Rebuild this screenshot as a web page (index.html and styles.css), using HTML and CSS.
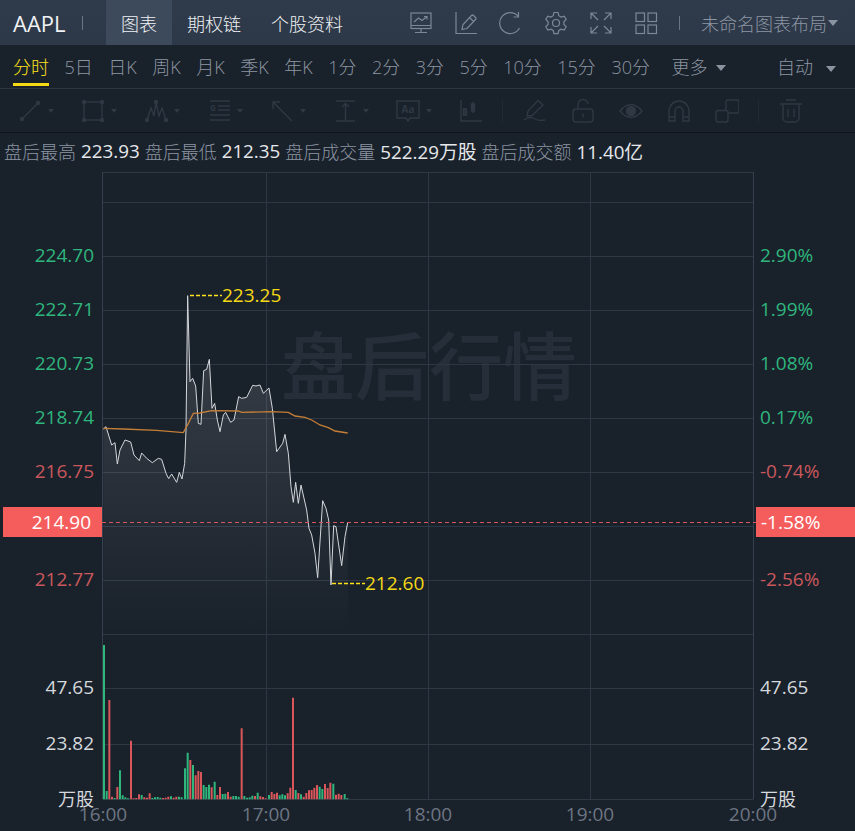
FILE: index.html
```html
<!DOCTYPE html>
<html lang="zh-CN">

<head>
    <meta charset="UTF-8">
    <title>AAPL 盘后行情</title>
    <link rel="stylesheet" href="styles.css">
</head>

<body>
    <header class="topbar">
        <span class="symbol">AAPL</span>
        <span class="top-sep"></span>
        <nav class="tabs">
            <a class="tab active">图表</a>
            <a class="tab">期权链</a>
            <a class="tab">个股资料</a>
        </nav>
        <div class="top-icons">
            <svg viewBox="0 0 24 24"><rect x="2" y="2" width="20" height="15.500"/><path d="M2 14.500h20M12 17.500v4M6 21.500h12M5 11l4.500-4 3.500 2.500 5-4M15 5.500h3v3"/></svg>
            <svg viewBox="0 0 24 24"><path d="M2 1v21.500h21M8 18.500l1-5 8.500-9q1-1 2 0l2 2q1 1 0 2L13 17.500zM15.500 6.500l4 4"/></svg>
            <svg viewBox="0 0 24 24"><path d="M20.500 17A10.500 10.500 0 1 1 19 5M19.500 1v5h-5"/></svg>
            <svg viewBox="0 0 24 24"><path d="M10 1.500h4l.8 3.200 2.300 1.300 3.100-.9 2 3.400-2.300 2.300v2.600l2.300 2.300-2 3.400-3.100-.9-2.300 1.300-.8 3.200h-4l-.8-3.200-2.300-1.300-3.100.9-2-3.400 2.300-2.300v-2.600L1.800 8.500l2-3.400 3.100.9 2.300-1.300z"/><circle cx="12" cy="12" r="3.500"/></svg>
            <svg viewBox="0 0 24 24"><path d="M2 8V2h6M16 2h6v6M2 16v6h6M22 16v6h-6M2 2l7 7M22 2l-7 7M2 22l7-7M22 22l-7-7"/></svg>
            <svg viewBox="0 0 24 24"><rect x="2" y="2" width="8.500" height="8.500"/><rect x="14" y="2" width="8.500" height="8.500"/><rect x="2" y="14" width="8.500" height="8.500"/><rect x="14" y="14" width="8.500" height="8.500"/></svg>
        </div>
        <span class="top-sep layout-sep"></span>
        <span class="layout-name">未命名图表布局</span>
        <i class="caret layout-caret"></i>
    </header>

    <div class="periods">
        <a class="period active">分时</a>
        <a class="period">5日</a>
        <a class="period">日K</a>
        <a class="period">周K</a>
        <a class="period">月K</a>
        <a class="period">季K</a>
        <a class="period">年K</a>
        <a class="period">1分</a>
        <a class="period">2分</a>
        <a class="period">3分</a>
        <a class="period">5分</a>
        <a class="period">10分</a>
        <a class="period">15分</a>
        <a class="period">30分</a>
        <a class="period more">更多<i class="caret"></i></a>
        <a class="period auto">自动<i class="caret"></i></a>
    </div>

    <div class="tools">
        <div class="tool">
            <svg viewBox="0 0 24 24"><path d="M4 20L20 4"/><circle cx="4" cy="20" r="1.500"/><circle cx="20" cy="4" r="1.500"/></svg>
            <i class="caret"></i>
        </div>
        <div class="tool">
            <svg viewBox="0 0 24 24"><rect x="3" y="3" width="18" height="18"/><circle cx="3" cy="3" r="1.500"/><circle cx="21" cy="3" r="1.500"/><circle cx="3" cy="21" r="1.500"/><circle cx="21" cy="21" r="1.500"/></svg>
            <i class="caret"></i>
        </div>
        <div class="tool">
            <svg viewBox="0 0 24 24"><path d="M3 21L7 9l3 8 2-14 3 14 3-8 4 12"/><circle cx="3" cy="21" r="1.500"/><circle cx="12" cy="3" r="1.500"/><circle cx="22" cy="21" r="1.500"/></svg>
            <i class="caret"></i>
        </div>
        <div class="tool">
            <svg viewBox="0 0 24 24"><path d="M3 2h20M11 7h12M11 11h12M3 16h20M3 21h20"/><text class="gann" x="3" y="12">G</text></svg>
            <i class="caret"></i>
        </div>
        <div class="tool">
            <svg viewBox="0 0 24 24"><path d="M3 10V3h7M3 3l19 19"/></svg>
            <i class="caret"></i>
        </div>
        <div class="tool">
            <svg viewBox="0 0 24 24"><path d="M3 2h19M3 22h19M12.500 5v17M9 8l3.500-3.500L16 8"/></svg>
            <i class="caret"></i>
        </div>
        <div class="tool">
            <svg viewBox="0 0 24 24"><path d="M1 2h22v17h-9l-2 3-2-3H1z"/><text class="aa" x="12" y="14">Aa</text></svg>
            <i class="caret"></i>
        </div>
        <svg class="tool-icon" viewBox="0 0 24 24"><path d="M2 1v21h21M6 9v8M14 3v11"/><rect x="4.500" y="10" width="3" height="6"/><rect class="solid" x="12.500" y="5" width="3" height="7"/></svg>
        <span class="tool-sep"></span>
        <svg class="tool-icon" viewBox="0 0 24 24"><path d="M4 17l1-5L15 1.500l5 4.500L9 16.500zM1 21c5-4 8-3 11-1 4 2.500 7 1 10 1"/></svg>
        <svg class="tool-icon" viewBox="0 0 24 24"><rect x="2" y="10" width="20" height="13" rx="3"/><path d="M7 10V6a5 5 0 0 1 10-1M12 14.500v4"/></svg>
        <svg class="tool-icon" viewBox="0 0 24 24"><path d="M1 12q11-13 22 0-11 13-22 0z"/><circle class="solid" cx="12" cy="12" r="4.500"/></svg>
        <svg class="tool-icon" viewBox="0 0 24 24"><path d="M2 22V12a10 10 0 0 1 20 0v10h-6V12a4 4 0 0 0-8 0v10zM2 18h6M16 18h6"/></svg>
        <svg class="tool-icon" viewBox="0 0 24 24"><rect x="1" y="11.500" width="12" height="11.500" rx="2"/><path d="M11 11.500V3a2 2 0 0 1 2-2h9a2 2 0 0 1 2 2v9a2 2 0 0 1-2 2h-9"/></svg>
        <span class="tool-sep"></span>
        <svg class="tool-icon" viewBox="0 0 24 24"><path d="M7 1h10M1 5h22M4 5v14a4 4 0 0 0 4 4h8a4 4 0 0 0 4-4V5M9 10v8M15 10v8"/></svg>
    </div>

    <div class="quote-info">
        <span>盘后最高</span><b>223.93</b>
        <span>盘后最低</span><b>212.35</b>
        <span>盘后成交量</span><b>522.29万股</b>
        <span>盘后成交额</span><b>11.40亿</b>
    </div>

    <svg class="chart" viewBox="0 172 855 659">
        <defs>
            <linearGradient id="area" gradientUnits="userSpaceOnUse" x1="0" y1="40" x2="0" y2="1062">
                <stop offset="0" stop-color="#fff" stop-opacity=".15"/>
                <stop offset="1" stop-color="#fff" stop-opacity="0"/>
            </linearGradient>
        </defs>

        <text class="watermark" x="281" y="394">盘后行情</text>

        <path class="grid" d="M102.500 172.500H753.500M102.500 202.500H753.500M102.500 256.500H753.500M102.500 310.500H753.500M102.500 364.500H753.500M102.500 418.500H753.500M102.500 472.500H753.500M102.500 526.500H753.500M102.500 580.500H753.500M102.500 634.500H753.500M102.500 688.500H753.500M102.500 744.500H753.500M102.500 799.500H753.500"/>
        <path class="grid" d="M266.500 172V799M428.500 172V799M590.500 172V799"/>
        <path class="axis" d="M102.500 172V799M753.500 172V799"/>

        <g transform="translate(90 280) scale(.33333)">
            <path class="area" d="M40 447L48 440 65 495 75 488 82 552 90 510 105 480 122 486 132 525 148 542 155 519 170 535 187 548 205 535 215 538 228 580 236 596 245 582 260 607 268 577 276 597 284 550 288 450 293 47 300 305 308 295 317 318 325 430 333 433 341 272 350 268 358 238 366 385 374 370 382 420 390 455 400 405 407 397 422 427 432 420 446 350 455 355 470 352 488 316 498 318 510 315 520 340 537 324 547 385 560 515 578 490 585 463 595 520 603 620 610 667 617 607 625 670 633 615 650 690 657 745 665 765 675 820 683 893 698 662 708 685 716 720 723 915 731 737 738 740 755 857 765 770 773 728V1062H40z"/>
            <path class="price" d="M40 447L48 440 65 495 75 488 82 552 90 510 105 480 122 486 132 525 148 542 155 519 170 535 187 548 205 535 215 538 228 580 236 596 245 582 260 607 268 577 276 597 284 550 288 450 293 47 300 305 308 295 317 318 325 430 333 433 341 272 350 268 358 238 366 385 374 370 382 420 390 455 400 405 407 397 422 427 432 420 446 350 455 355 470 352 488 316 498 318 510 315 520 340 537 324 547 385 560 515 578 490 585 463 595 520 603 620 610 667 617 607 625 670 633 615 650 690 657 745 665 765 675 820 683 893 698 662 708 685 716 720 723 915 731 737 738 740 755 857 765 770 773 728"/>
            <path class="avg" d="M40 445L100 447 200 451 280 458 295 430 310 400 330 399 365 392 445 393 455 397 545 395 595 397 615 408 645 412 665 420 690 435 715 443 735 453 773 459"/>
        </g>

        <path class="extreme" d="M190 295.500H222M332 583.500H365"/>
        <text class="extreme-label" x="222" y="302">223.25</text>
        <text class="extreme-label" x="365" y="590">212.60</text>

        <g transform="translate(90 640) scale(.33333)">
            <path class="vol-up" d="M42 478V15M50 478V453M74 478V474M90 478V391M98 478V466M106 478V472M114 478V475M155 478V465M187 478V474M195 478V472M203 478V471M211 478V473M243 478V469M267 478V470M275 478V472M285 478V385M293 478V338M309 478V375M341 478V435M349 478V441M357 478V434M374 478V425M398 478V462M406 478V461M430 478V468M438 478V468M446 478V470M463 478V468M471 478V473M479 478V472M487 478V467M503 478V458M537 478V465M569 478V466M577 478V463M585 478V466M617 478V450M633 478V463M689 478V440M697 478V447M730 478V431M764 478V462M772 478V475"/>
            <path class="vol-down" d="M58 478V180M66 478V470M82 478V441M123 478V302M131 478V475M139 478V474M147 478V463M163 478V472M171 478V473M179 478V460M219 478V474M227 478V473M235 478V470M251 478V473M259 478V470M301 478V360M317 478V406M325 478V393M333 478V396M365 478V442M382 478V465M390 478V441M414 478V456M422 478V470M455 478V265M495 478V468M511 478V469M519 478V471M527 478V475M545 478V456M553 478V462M561 478V458M593 478V460M601 478V443M609 478V173M625 478V459M641 478V470M649 478V459M657 478V451M665 478V450M673 478V443M681 478V435M705 478V432M713 478V444M721 478V428M738 478V464M746 478V461M754 478V465"/>
        </g>

        <path class="last-line" d="M102 522.500H756"/>
        <rect class="last-tag" x="3" y="507" width="99" height="30"/>
        <rect class="last-tag" x="756" y="507" width="99" height="30"/>

        <g class="label-left">
            <text class="up" y="262">224.70</text>
            <text class="up" y="316">222.71</text>
            <text class="up" y="370">220.73</text>
            <text class="up" y="424">218.74</text>
            <text class="down" y="478">216.75</text>
            <text class="tag-text" y="529">214.90</text>
            <text class="down" y="586">212.77</text>
            <text class="vol" y="694">47.65</text>
            <text class="vol" y="750">23.82</text>
            <text class="vol unit" y="806">万股</text>
        </g>
        <g class="label-right">
            <text class="up" y="262">2.90%</text>
            <text class="up" y="316">1.99%</text>
            <text class="up" y="370">1.08%</text>
            <text class="up" y="424">0.17%</text>
            <text class="down" y="478">-0.74%</text>
            <text class="tag-text" y="529">-1.58%</text>
            <text class="down" y="586">-2.56%</text>
            <text class="vol" y="694">47.65</text>
            <text class="vol" y="750">23.82</text>
            <text class="vol unit" y="806">万股</text>
        </g>
        <g class="label-time">
            <text x="103" y="821">16:00</text>
            <text x="266" y="821">17:00</text>
            <text x="428" y="821">18:00</text>
            <text x="590" y="821">19:00</text>
            <text x="753" y="821">20:00</text>
        </g>
    </svg>
</body>

</html>
```
FILE: styles.css
```css
html,
body {
    margin: 0;
    padding: 0;
    height: 100%;
    overflow: hidden;
}

body {
    display: flex;
    flex-direction: column;
    background: #19212b;
    font-family: "Open Sans", "Noto Sans CJK SC", sans-serif;
    font-size: 18px;
    font-weight: 300;
    color: #f0f2f4;
}

i {
    font-style: normal;
}

.caret {
    display: inline-block;
    width: 0;
    height: 0;
    border-left: 5px solid transparent;
    border-right: 5px solid transparent;
    border-top: 6px solid #8a93a0;
}

/* top bar */
.topbar {
    display: flex;
    align-items: center;
    flex: none;
    height: 45px;
    padding-left: 13px;
    background: linear-gradient(#2f3b4b, #2d3848);
}

.symbol {
    width: 54px;
    font-size: 22px;
    font-weight: 400;
}

.top-sep {
    width: 1px;
    height: 14px;
    margin-left: 15px;
    background: #6b7482;
}

.tabs {
    display: flex;
    align-items: stretch;
    align-self: stretch;
    margin-left: 23px;
}

.tab {
    display: flex;
    align-items: center;
    padding: 0 15px;
}

.tab.active {
    background: #3d4a5c;
}

.top-icons {
    display: flex;
    gap: 21px;
    margin-left: 51px;
}

.top-icons svg {
    width: 24px;
    height: 24px;
    fill: none;
    stroke: #7d8795;
    stroke-width: 1.2;
}

.layout-sep {
    margin-left: 21px;
}

.layout-name {
    margin-left: 21px;
    color: #8c95a2;
}

.layout-caret {
    margin-left: 1px;
}

/* period row */
.periods {
    display: flex;
    align-items: center;
    flex: none;
    gap: 15.500px;
    height: 41px;
    padding: 0 0 2px 13px;
    border-bottom: 1px solid #2d3743;
    color: #8c95a2;
}

.period {
    position: relative;
    white-space: nowrap;
}

.period.active {
    color: #ffe21a;
}

.period.active::after {
    content: "";
    position: absolute;
    left: 0;
    right: 0;
    bottom: -7px;
    height: 3px;
    background: #f5d915;
}

.more {
    margin-left: 6px;
}

.more .caret {
    margin-left: 9px;
    vertical-align: 3px;
}

.auto {
    margin-left: auto;
    margin-right: 19px;
}

.auto .caret {
    margin-left: 13px;
    vertical-align: 2px;
}

/* drawing tools, disabled look */
.tools {
    display: flex;
    align-items: center;
    flex: none;
    height: 43px;
    padding-left: 18px;
    border-bottom: 1px solid #10151b;
}

.tools svg {
    width: 24px;
    height: 24px;
    flex: none;
    fill: none;
    stroke: #2f3843;
    stroke-width: 1.4;
}

.tools .caret {
    margin-left: 6px;
    border-left-width: 3px;
    border-right-width: 3px;
    border-top: 4px solid #2f3843;
}

.tool {
    display: flex;
    align-items: center;
    width: 63px;
    flex: none;
}

.tools .tool-icon {
    margin-right: 24px;
}

.tools .tool-icon + .tool-sep {
    margin-left: -5px;
    margin-right: 20px;
}

.tool-sep {
    width: 1px;
    height: 24px;
    background: #212933;
}

.tools .solid,
.tools circle[r="1.500"] {
    fill: #2f3843;
}

.gann,
.aa {
    fill: #2f3843;
    stroke: none;
    font-size: 8px;
    font-weight: 700;
}

.aa {
    font-size: 10px;
    text-anchor: middle;
}

/* after hours summary */
.quote-info {
    display: flex;
    align-items: center;
    flex: none;
    gap: 5px;
    height: 39px;
    box-sizing: border-box;
    padding: 0 0 3px 4px;
    white-space: nowrap;
}

.quote-info span {
    color: #8c95a2;
}

.quote-info b {
    font-weight: 400;
    font-size: 18.800px;
    color: #e6e8ec;
}

/* chart */
.chart {
    display: block;
    flex: none;
    width: 855px;
    height: 659px;
    font-size: 19px;
    font-weight: 400;
}

.watermark {
    font-size: 74px;
    font-weight: 500;
    fill: #262e39;
}

.grid {
    fill: none;
    stroke: #2e3844;
    stroke-width: 1;
}

.axis {
    fill: none;
    stroke: #35414e;
    stroke-width: 1;
}

.area {
    fill: url(#area);
}

.price {
    fill: none;
    stroke: #d4d7db;
    stroke-width: 3;
    stroke-linejoin: round;
}

.avg {
    fill: none;
    stroke: #c47f37;
    stroke-width: 4;
}

.extreme {
    fill: none;
    stroke: #ffe21a;
    stroke-width: 1.500;
    stroke-dasharray: 4 2;
}

.extreme-label {
    fill: #f5d915;
}

.vol-up,
.vol-down {
    fill: none;
    stroke-width: 6;
}

.vol-up {
    stroke: #2fb67d;
}

.vol-down {
    stroke: #d9575a;
}

.last-line {
    fill: none;
    stroke: #d9575a;
    stroke-width: 1;
    stroke-dasharray: 4 3;
}

.last-tag {
    fill: #f55d5d;
}

.label-left text {
    text-anchor: end;
    transform: translateX(94px);
}

.label-left .tag-text {
    transform: translateX(91px);
}

.label-right text {
    transform: translateX(760px);
}

.label-right .tag-text {
    transform: translateX(761px);
}

.label-time text {
    text-anchor: middle;
    fill: #6d7582;
}

.up {
    fill: #2fb67d;
}

.down {
    fill: #c9585c;
}

.vol {
    fill: #d5d8dc;
}

.unit {
    font-size: 18px;
}

.tag-text {
    fill: #fff;
}
```
